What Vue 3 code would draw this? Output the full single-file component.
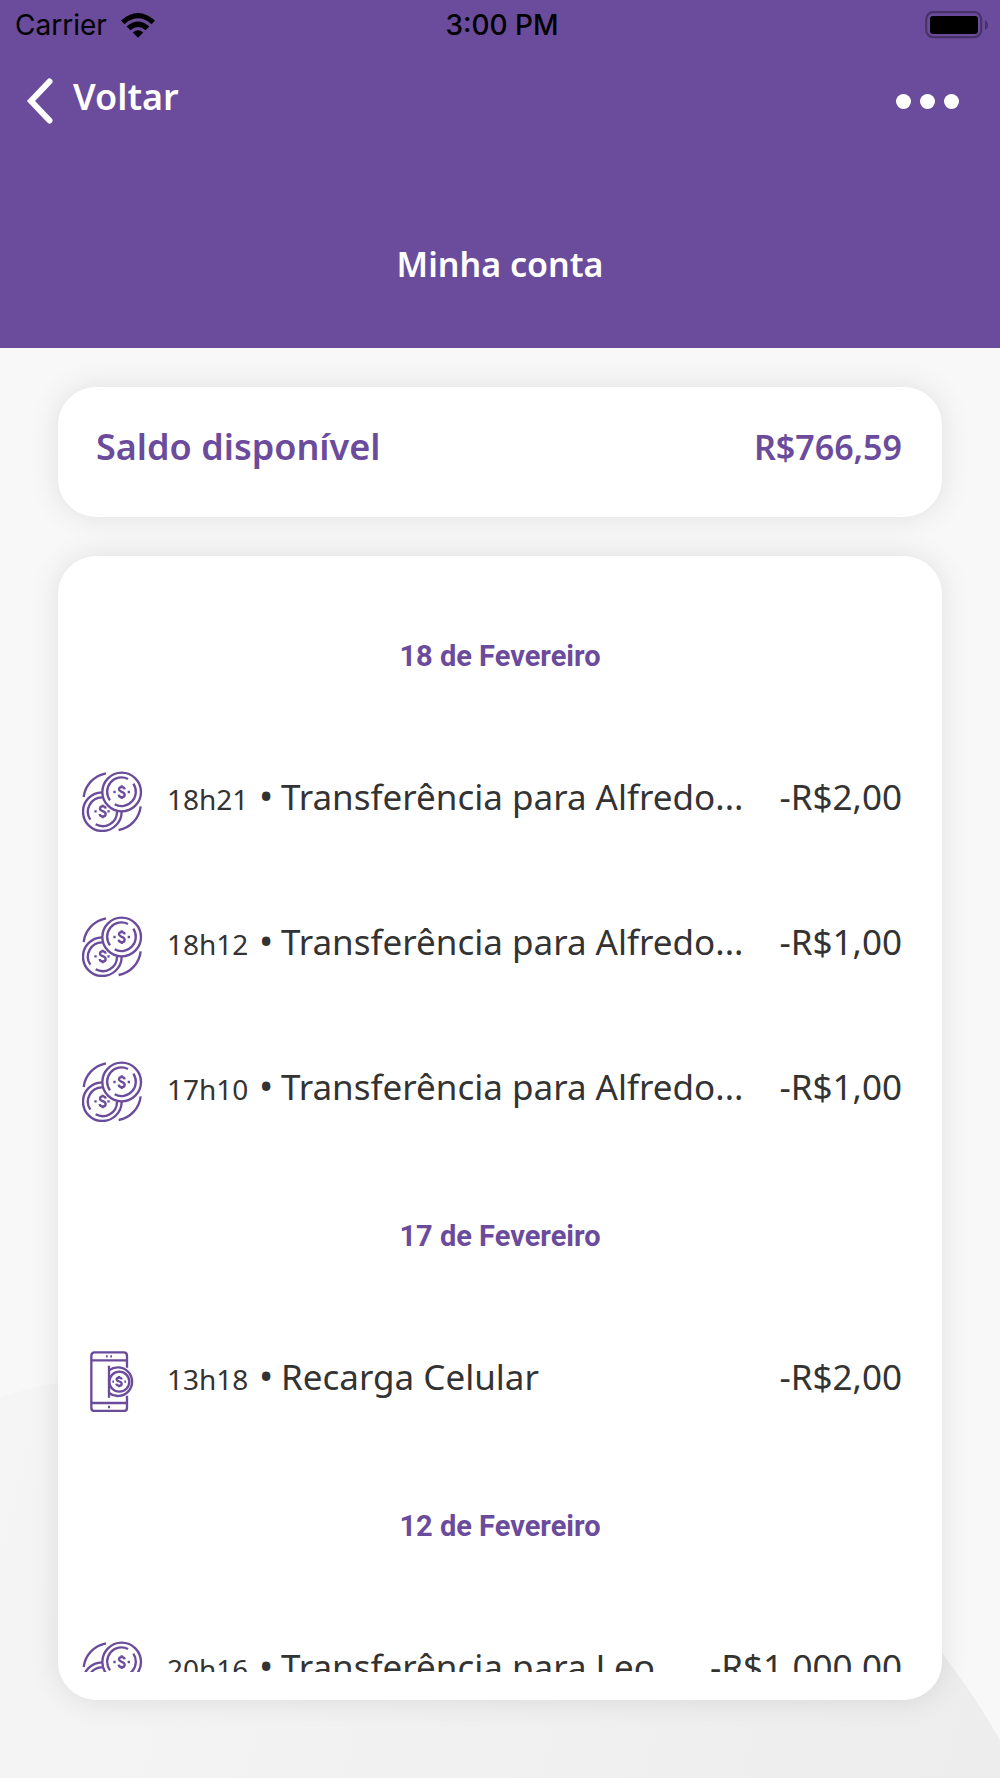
<script setup>
const groups = [
  {
    date: '18 de Fevereiro',
    items: [
      { kind: 'coins', time: '18h21', title: 'Transferência para Alfredo...', amount: '-R$2,00' },
      { kind: 'coins', time: '18h12', title: 'Transferência para Alfredo...', amount: '-R$1,00' },
      { kind: 'coins', time: '17h10', title: 'Transferência para Alfredo...', amount: '-R$1,00' },
    ],
  },
  {
    date: '17 de Fevereiro',
    items: [{ kind: 'phone', time: '13h18', title: 'Recarga Celular', amount: '-R$2,00' }],
  },
  {
    date: '12 de Fevereiro',
    items: [{ kind: 'coins', time: '20h16', title: 'Transferência para Leo', amount: '-R$1.000,00' }],
  },
]
</script>

<template>
  <div class="screen">
    <svg class="backdrop" viewBox="0 0 1000 440" aria-hidden="true">
      <defs>
        <linearGradient id="blob" x1="0" y1="0" x2="1000" y2="260" gradientUnits="userSpaceOnUse">
          <stop offset="0" stop-color="#f5f5f5" />
          <stop offset="1" stop-color="#ededed" />
        </linearGradient>
      </defs>
      <path d="M0 60Q30 49 57 45C400 0 750 60 942 315Q975 358 1000 402V440H0Z" fill="url(#blob)" />
    </svg>

    <header class="header">
      <div class="status">
        <div class="carrier">
          <span>Carrier</span>
          <svg class="wifi" viewBox="0 0 34 25" aria-hidden="true">
            <path d="M0 7.500Q17-7.500 34 7.500L30.500 11.200Q17-.5 3.500 11.200Z" />
            <path d="M5.700 13.400Q17 3.400 28.300 13.400L24.600 17.200Q17 10.800 9.400 17.200Z" />
            <path d="M11.800 19.400Q17 15 22.200 19.400L17 24.700Z" />
          </svg>
        </div>
        <span class="clock">3:00 PM</span>
        <svg class="battery" viewBox="0 0 64 28" aria-hidden="true">
          <rect x="1.200" y="1.200" width="55" height="25" rx="7" fill="none" stroke="#483269" stroke-width="2.200" />
          <rect x="5" y="5" width="48" height="18" rx="3" />
          <path d="M60 9C64 11 64 17 60 19Z" fill="#483269" />
        </svg>
      </div>
      <nav class="nav">
        <button class="back" type="button">
          <svg class="chevron" viewBox="0 0 28 46" aria-hidden="true">
            <path d="M23.500 3.500L5 23L23.500 42.500" />
          </svg>
          <span>Voltar</span>
        </button>
        <button class="more" type="button" aria-label="Mais opções">
          <i></i><i></i><i></i>
        </button>
      </nav>
      <h1 class="title">Minha conta</h1>
    </header>

    <main class="content">
      <section class="card balance">
        <h2>Saldo disponível</h2>
        <strong>R$766,59</strong>
      </section>

      <section class="card statement">
        <div class="scroller">
          <template v-for="group in groups" :key="group.date">
            <h3 class="date">{{ group.date }}</h3>
            <ul class="list">
              <li v-for="item in group.items" :key="item.time" class="row">
                <svg v-if="item.kind === 'coins'" class="icon" viewBox="36 34 183 183" aria-hidden="true">
                  <path d="M41 112C45 77 72 48 108 41M212 140C208 176 181 205 146 211" />
                  <path d="M96 98A58 58 0 1 0 155 157" />
                  <path d="M99 113A43 43 0 0 0 61 180M77 194A43 43 0 0 0 141 157" />
                  <circle cx="155" cy="97" r="58" />
                  <path d="M174 58A43 43 0 0 0 120 122M134 134A43 43 0 0 0 190 72" />
                  <path d="M164 89C163 80 147 80 147 89C147 98 164 95 164 105C164 115 147 115 146 105M155 77V83M155 111V118" />
                  <path d="M107 147C106 138 90 138 90 147C90 156 107 153 107 163C107 173 90 173 89 163M98 135V141M98 169V176" />
                  <path d="M130 97h7M173 97h7M73 155h7M112 155h7" />
                </svg>
                <svg v-else class="icon" viewBox="36 34 183 183" aria-hidden="true">
                  <path d="M171 84V48Q171 38 161 38H74Q64 38 64 48V204Q64 214 74 214H161Q171 214 171 204V168" />
                  <path d="M64 62H171M64 190H171M117 78V174M108 50h5M121 50h5M114 202h6" />
                  <path d="M117 92A43 43 0 1 1 117 160" />
                  <circle cx="148" cy="126" r="30" />
                  <path d="M155 119C154 112 140 112 140 119C140 127 155 124 155 132C155 140 140 140 139 132M147 109V114M147 137V143" />
                  <path d="M127 126h5M163 126h5" />
                </svg>
                <div class="details">
                  <span class="time">{{ item.time }}</span>
                  <span class="bullet">•</span>
                  <span class="label">{{ item.title }}</span>
                  <span class="amount">{{ item.amount }}</span>
                </div>
              </li>
            </ul>
          </template>
        </div>
      </section>
    </main>
  </div>
</template>

<style>
body {
  margin: 0;
}
</style>

<style scoped>
.screen {
  position: relative;
  display: flex;
  flex-direction: column;
  height: 100vh;
  overflow: hidden;
  background: #f8f8f8;
  color: #333;
  font-family: "Noto Sans", sans-serif;
}
.backdrop {
  position: absolute;
  left: 0;
  bottom: 0;
  width: 100%;
}
h1, h2, h3, ul {
  margin: 0;
  padding: 0;
}
button {
  border: 0;
  padding: 0;
  background: none;
  color: inherit;
  font: inherit;
}
.header {
  position: relative;
  flex: none;
  padding-bottom: 60px;
  background: #6b4b9b;
  color: #fff;
}
.status {
  display: grid;
  grid-template-columns: 1fr auto 1fr;
  align-items: center;
  height: 50px;
  padding: 0 11px 0 15px;
  color: #000;
  font-family: Inter, sans-serif;
  font-size: 28px;
}
.carrier {
  display: flex;
  align-items: center;
  gap: 14px;
}
.wifi {
  width: 34px;
  height: 25px;
}
.clock {
  font-weight: 500;
}
.battery {
  justify-self: end;
  width: 64px;
  height: 28px;
}
.nav {
  display: flex;
  align-items: center;
  justify-content: space-between;
  height: 102px;
  padding: 0 41px 0 26px;
}
.back {
  display: flex;
  align-items: center;
  gap: 19px;
  font-size: 36px;
  font-weight: 600;
  line-height: 48px;
}
.back span {
  padding-bottom: 8px;
}
.chevron {
  width: 28px;
  height: 46px;
  fill: none;
  stroke: #fff;
  stroke-width: 6;
  stroke-linecap: round;
}
.more {
  display: flex;
  gap: 9px;
}
.more i {
  width: 15px;
  height: 15px;
  border-radius: 50%;
  background: #fff;
}
.title {
  padding-top: 88px;
  font-size: 34px;
  font-weight: 600;
  line-height: 48px;
  text-align: center;
}
.content {
  position: relative;
  flex: 1;
  display: flex;
  flex-direction: column;
  gap: 39px;
  min-height: 0;
  padding: 39px 58px 78px;
}
.card {
  border-radius: 38px;
  background: #fff;
  box-shadow: 0 0 30px rgba(0, 0, 0, 0.1);
}
.balance {
  display: flex;
  justify-content: space-between;
  padding: 36px 40px 46px 38px;
  color: #6b4b9b;
  font-weight: 600;
  line-height: 48px;
}
.balance h2 {
  font-size: 36px;
  font-weight: inherit;
}
.balance strong {
  font-size: 34px;
  font-weight: inherit;
}
.statement {
  flex: 1;
  display: flex;
  flex-direction: column;
  min-height: 0;
  padding: 28px 0;
}
.scroller {
  flex: 1;
  min-height: 0;
  overflow: hidden;
}
.date {
  color: #6b4b9b;
  font-family: Roboto, sans-serif;
  font-size: 29px;
  font-weight: 700;
  line-height: 145px;
  text-align: center;
}
.list {
  list-style: none;
}
.row {
  display: flex;
  align-items: center;
  height: 145px;
  padding: 0 40px 0 24px;
}
.icon {
  flex: none;
  width: 61px;
  height: 61px;
  fill: none;
  stroke: #6b4b9b;
  stroke-width: 7;
}
.details {
  flex: 1;
  display: flex;
  align-items: baseline;
  padding: 0 0 10px 24px;
  font-size: 35px;
  line-height: 48px;
}
.time {
  flex: none;
  width: 92px;
  font-size: 28px;
}
.bullet {
  flex: none;
  width: 22px;
  font-size: 38px;
}
.label {
  flex: 1;
  white-space: nowrap;
}
.amount {
  flex: none;
}
</style>
